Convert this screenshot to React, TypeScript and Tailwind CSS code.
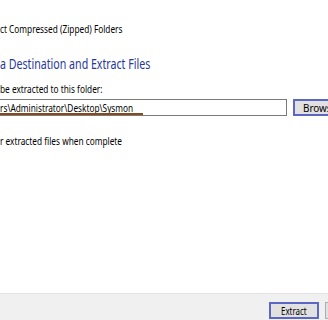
import React from "react";

const ui = '"Noto Sans", "Open Sans", sans-serif';

// the capture is squeezed horizontally, so text is narrowed to fit
function Narrow({ children, center }: { children: React.ReactNode; center?: boolean }) {
  return (
    <span
      className={
        center
          ? "inline-block whitespace-nowrap origin-center scale-x-[0.72]"
          : "inline-block whitespace-nowrap origin-left scale-x-[0.72]"
      }
    >
      {children}
    </span>
  );
}

export default function App() {
  const [show, setShow] = React.useState(true);

  return (
    <div
      className="w-[328px] h-[320px] overflow-hidden bg-white flex flex-col text-[#000] select-none"
      style={{ fontFamily: ui }}
    >
      <div className="flex-1 flex flex-col">
        <div className="mt-[21px] h-[16px] text-[11.5px] leading-[16px] whitespace-nowrap">
          <Narrow>ct Compressed (Zipped) Folders</Narrow>
        </div>

        <div className="mt-[17px] h-[20px] text-[14px] leading-[20px] text-[#27379a] whitespace-nowrap">
          <span className="inline-block whitespace-nowrap origin-left scale-x-[0.76]">
            a Destination and Extract Files
          </span>
        </div>

        <div className="mt-[7px] h-[16px] text-[11.5px] leading-[16px] whitespace-nowrap">
          <Narrow>be extracted to this folder:</Narrow>
        </div>

        <div className="mt-[2px] flex items-center h-[17px]">
          <div className="relative shrink-0 w-[287px] h-[17px] border border-[#7a7a7a] border-l-0 bg-white">
            <div className="h-[13px] text-[11.5px] leading-[15px] whitespace-nowrap">
              <Narrow>rs\Administrator\Desktop\Sysmon</Narrow>
            </div>
            <div className="absolute left-0 top-[13px] w-[143px] h-[2px] bg-[#8a4a1c]" />
          </div>
          <button className="ml-[6px] h-[17px] w-[60px] shrink-0 border-2 border-[#5c67c4] bg-[#e1e1e1] text-[11.5px] leading-[13px] text-left pl-[8px] whitespace-nowrap">
            <span className="inline-block whitespace-nowrap origin-left scale-x-[0.86]">Browse...</span>
          </button>
        </div>

        <label
          className="mt-[17px] h-[16px] text-[11.5px] leading-[16px] whitespace-nowrap flex items-center"
          onClick={() => setShow(!show)}
        >
          <Narrow>r extracted files when complete</Narrow>
        </label>
      </div>

      <div className="h-[27px] bg-[#f0f0f0] border-t border-[#e3e3e3] flex items-start">
        <div className="ml-[269px] mt-[8px] flex gap-[6px]">
          <button className="w-[50px] h-[17px] border-2 border-[#5c67c4] bg-[#e1e1e1] text-[11px] leading-[12px]">
            <Narrow center>Extract</Narrow>
          </button>
          <button className="w-[50px] h-[17px] border border-[#adadad] bg-[#e1e1e1] text-[11px] leading-[12px]">
            <Narrow center>Cancel</Narrow>
          </button>
        </div>
      </div>
    </div>
  );
}
